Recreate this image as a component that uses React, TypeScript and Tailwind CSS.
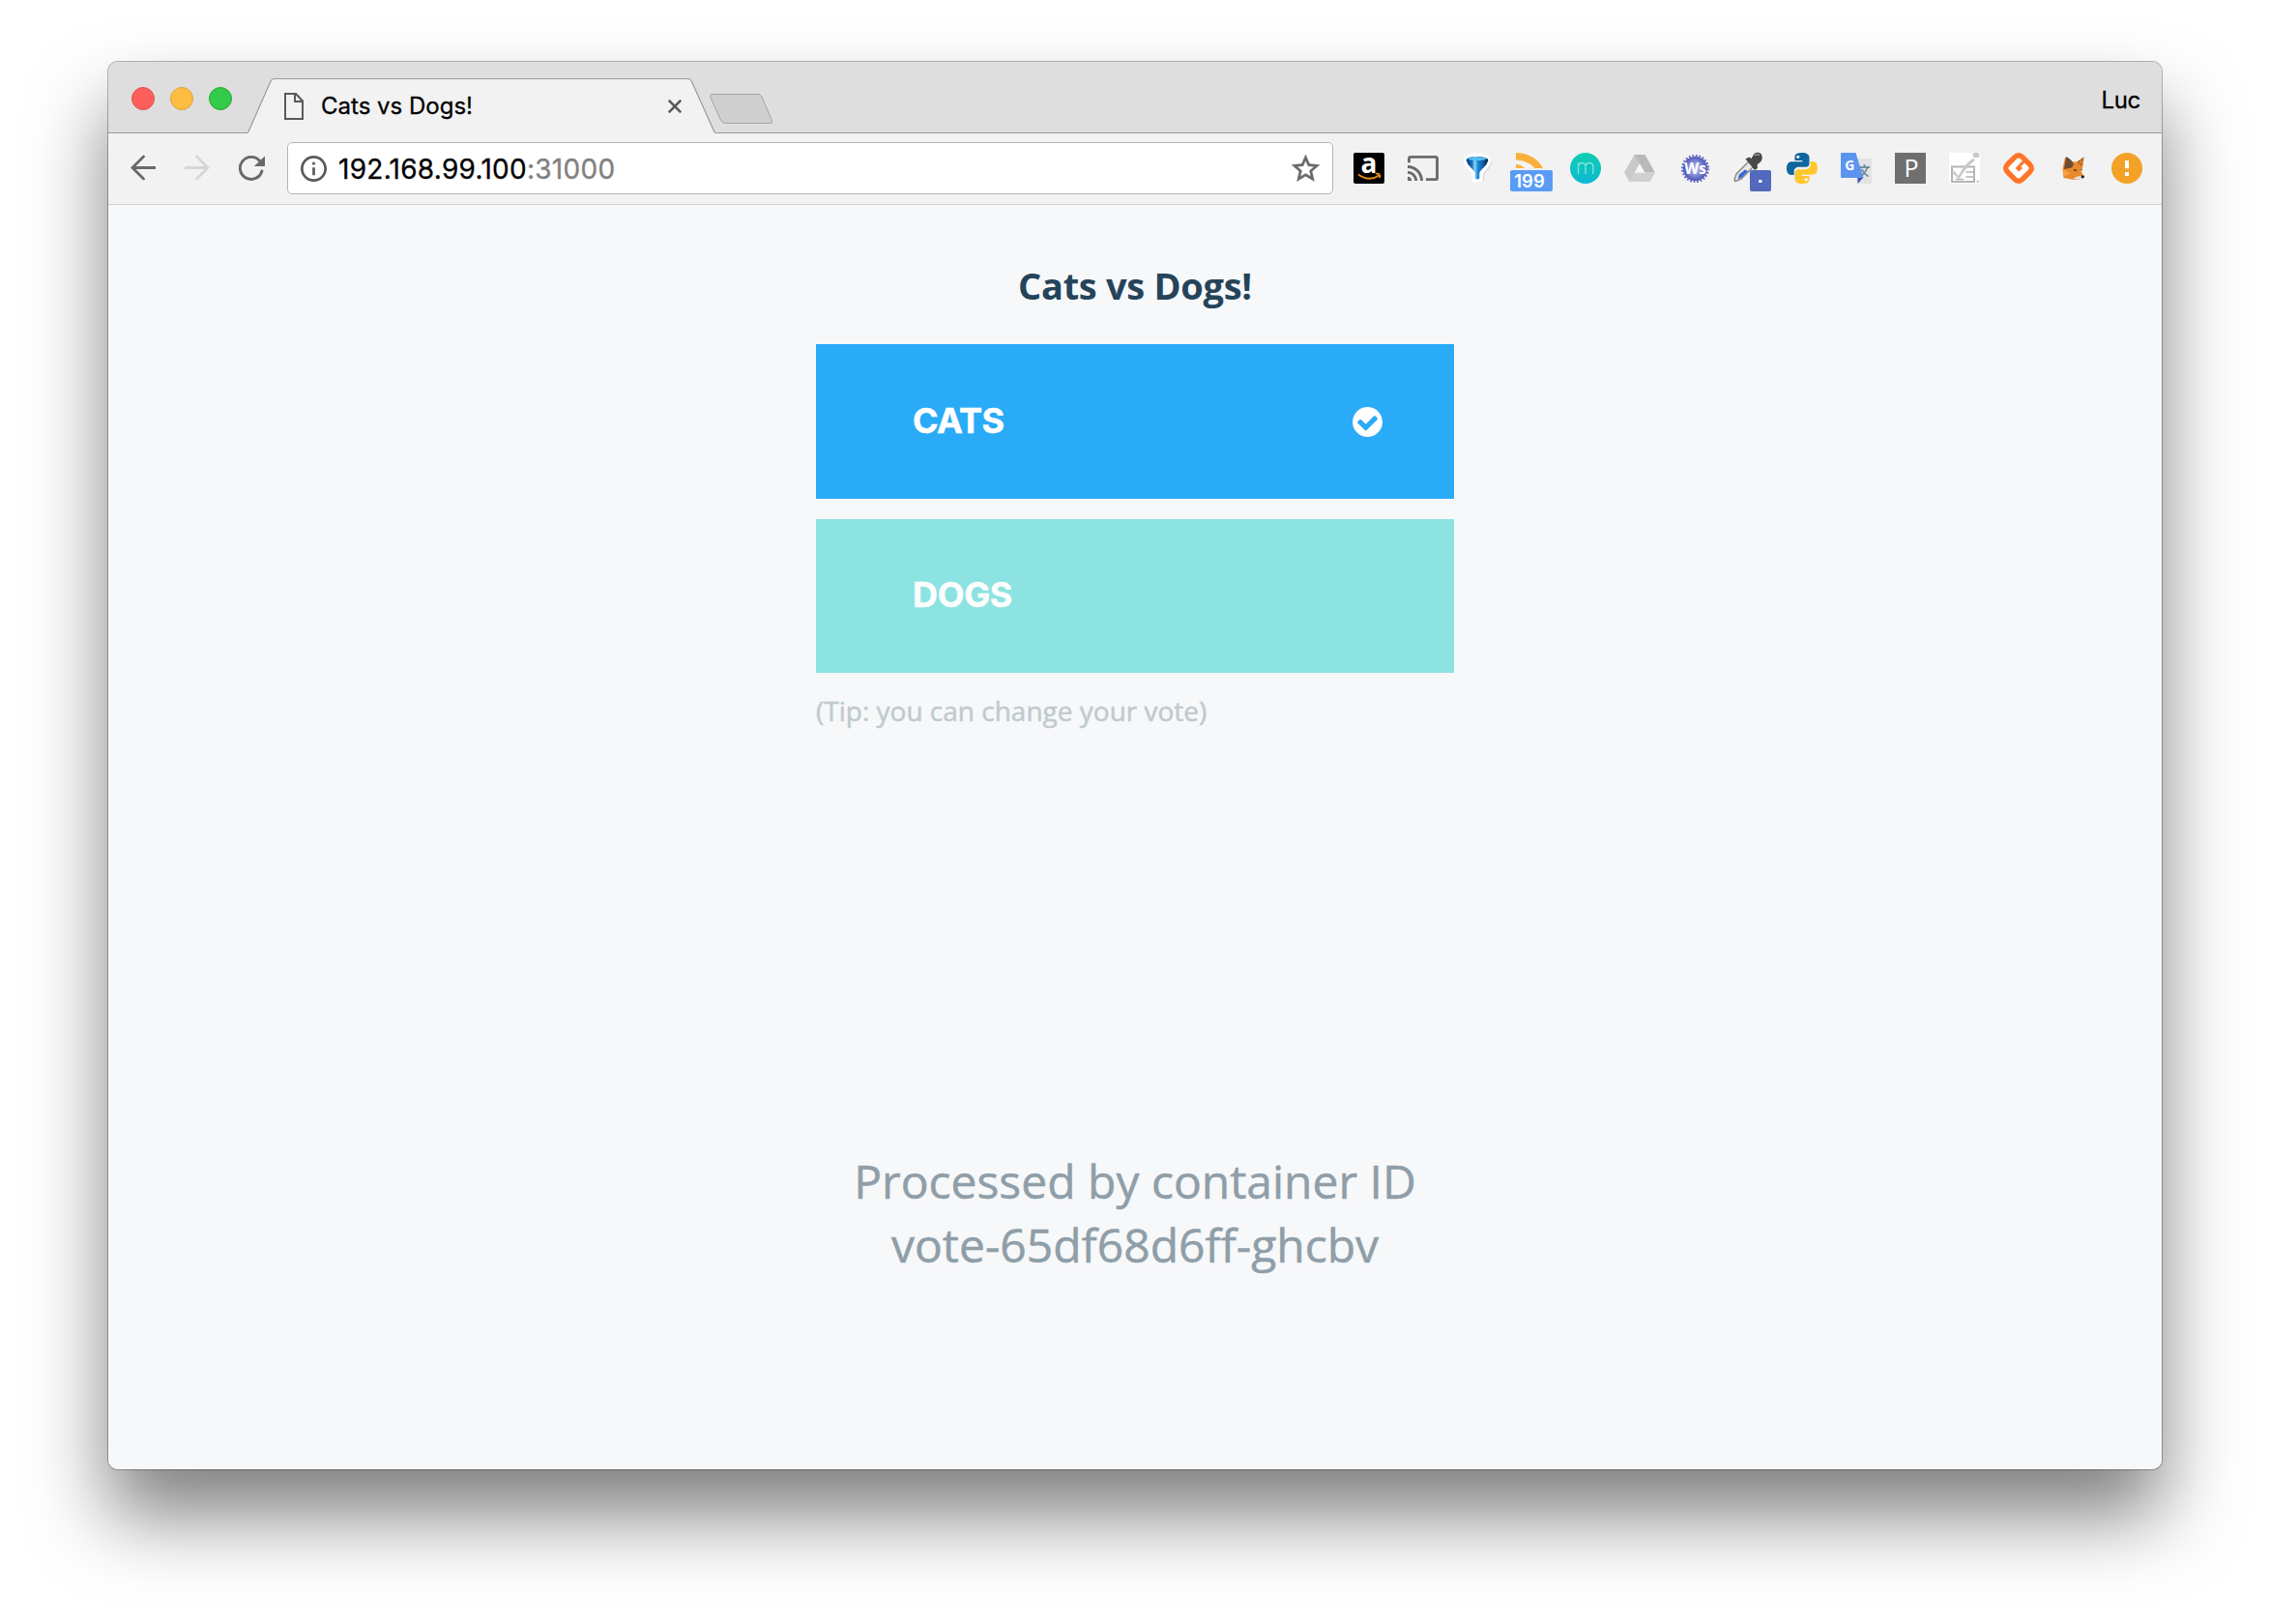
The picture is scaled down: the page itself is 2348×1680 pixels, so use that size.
import React from "react";

const CHROME = "font-[Inter,'Liberation_Sans',sans-serif]";

function TrafficLights() {
  return (
    <div className="flex gap-4 pt-[26px]">
      <span className="size-6 rounded-full border border-[#e2504c] bg-[#fd605c]" />
      <span className="size-6 rounded-full border border-[#dfa03a] bg-[#fdbd42]" />
      <span className="size-6 rounded-full border border-[#27aa35] bg-[#34ca4a]" />
    </div>
  );
}

function Tab() {
  return (
    <div className="relative -mb-px ml-4 mt-[17px] flex h-[57px] w-[484px]">
      <svg className="absolute inset-0" width="484" height="57" viewBox="0 0 484 57">
        <path d="M0 56.500 L24 3 Q25.300 .5 28 .5 H455.500 Q458 .5 459.300 3 L482 53.500 Q483 56.500 485 56.500 V57 H0 Z" fill="#f2f2f2" />
        <path d="M-1 56.500 Q.5 56.500 1.500 54 L24 3 Q25.300 .5 28 .5 H455.500 Q458 .5 459.300 3 L482 53.500 Q483 56.500 485 56.500" fill="none" stroke="#9b9b9b" strokeWidth="1.200" />
      </svg>
      <svg className="relative ml-[38px] mt-[15px] shrink-0" width="20" height="28" viewBox="0 0 20 28" fill="none" stroke="#5a5a5a" strokeWidth="2">
        <path d="M1 1 H12 L19 8.500 V27 H1 Z" />
        <path d="M11 1 V9 H19" />
      </svg>
      <span className="relative ml-[18px] mt-[13px] whitespace-nowrap text-[24px] leading-8 text-black [-webkit-text-stroke:0.3px]">Cats vs Dogs!</span>
      <svg className="absolute left-[435px] top-[22px]" width="14" height="14" viewBox="0 0 14 14" stroke="#5a5a5a" strokeWidth="2.600">
        <path d="M.7 .7 L13.300 13.300 M13.300 .7 L.7 13.300" />
      </svg>
    </div>
  );
}

function TitleBar() {
  return (
    <div className="flex h-[74px] items-start border-b border-[#9b9b9b] bg-[#dedede] pl-6">
      <TrafficLights />
      <Tab />
      <svg className="-ml-1.5 mt-[33px]" width="66" height="32" viewBox="0 0 66 32">
        <path d="M3 .5 H50 Q52.500 .5 53.800 3 L64.500 27.500 Q65.500 30.500 62.500 30.500 H16.500 Q13.500 30.500 12 28 L1 4 Q-.3 .5 3 .5 Z" fill="#cfcfcf" stroke="#a3a3a3" />
      </svg>
      <span className="ml-auto mr-[22px] mt-6 text-[24px] leading-8 tracking-[-0.3px] text-black [-webkit-text-stroke:0.3px]">Luc</span>
    </div>
  );
}

function Icon({ children }: { children: React.ReactNode }) {
  return (
    <svg className="size-8 shrink-0 overflow-visible" viewBox="0 0 32 32">
      {children}
    </svg>
  );
}

function Extensions() {
  return (
    <div className="ml-[21px] mt-5 flex gap-6">
      <Icon>
        <rect width="32" height="32" rx="2" fill="#000" />
        <text x="16" y="21" textAnchor="middle" fontFamily="Open Sans" fontWeight="700" fontSize="28" fill="#fff">a</text>
        <path d="M5 22.500 Q16 30.500 26.500 23.500 M23 21.800 Q28.500 20.800 27 26" fill="none" stroke="#e08a1a" strokeWidth="1.900" />
      </Icon>
      <svg className="size-8 shrink-0" viewBox="1 1 22 22" fill="#6b6b6b">
        <path d="M21 3H3c-1.100 0-2 .9-2 2v3h2V5h18v14h-7v2h7c1.100 0 2-.9 2-2V5c0-1.100-.9-2-2-2zM1 18v3h3c0-1.660-1.340-3-3-3zm0-4v2c2.760 0 5 2.240 5 5h2c0-3.870-3.130-7-7-7zm0-4v2c4.970 0 9 4.030 9 9h2c0-6.080-4.930-11-11-11z" />
      </svg>
      <Icon>
        <defs>
          <linearGradient id="funnel" x1="0" x2="1">
            <stop offset="0" stopColor="#0a3a70" />
            <stop offset=".25" stopColor="#0f6dbb" />
            <stop offset=".4" stopColor="#8fd2f8" />
            <stop offset=".52" stopColor="#1a8cd8" />
            <stop offset=".75" stopColor="#0d5ea8" />
            <stop offset="1" stopColor="#04203f" />
          </linearGradient>
        </defs>
        <path d="M6 9.500 Q7 5 17 5 T28 9.500 Q27.500 13.500 20 20.500 V27 H15.500 V20.500 Q7 13.500 6 9.500 Z" fill="#d8d8d8" stroke="#d8d8d8" strokeWidth="6.500" strokeLinejoin="round" />
        <path d="M5 8 Q6 4.500 16 4.500 T27 8 Q26 12.500 18.500 20 V27 H14 V20 Q6 12.500 5 8 Z" fill="#fff" stroke="#fff" strokeWidth="7" strokeLinejoin="round" />
        <path d="M4.500 7.500 Q6 4 16 4 T27.500 7.500 Q26.500 12 22.500 15.500 Q18.500 19 18.300 21 V26.500 Q16 28.500 13.700 26.500 V21 Q13.500 19 9.500 15.500 Q5.500 12 4.500 7.500 Z" fill="url(#funnel)" />
        <ellipse cx="15.800" cy="6.300" rx="9.500" ry="1.800" fill="#55bdf2" />
      </Icon>
      <Icon>
        <path d="M0 0 C12 0 23 6 28 16 H19.500 C15 10.500 8 8 0 7.500 Z" fill="#fbb03b" />
        <path d="M0 12 Q5 12 9 16 H0 Z" fill="#fbb03b" />
        <rect x="-6" y="18" width="44" height="22" rx="2" fill="#5a9cf5" />
        <text x="14" y="36" textAnchor="middle" fontFamily="Inter" fontWeight="600" fontSize="18.500" fill="#fff">199</text>
      </Icon>
      <Icon>
        <defs>
          <linearGradient id="teal" x1="0" y1="0" x2="0" y2="1">
            <stop offset="0" stopColor="#0fceb0" />
            <stop offset="1" stopColor="#0cb8d4" />
          </linearGradient>
        </defs>
        <circle cx="16" cy="16" r="16" fill="url(#teal)" />
        <path d="M8.500 22 V10.500 M8.500 14 Q9 10.500 12.200 10.500 T16 14 V22 M16 14 Q16.500 10.500 20 10.500 T23.800 14 V22" fill="none" stroke="#7fe6dc" strokeWidth="1.300" />
      </Icon>
      <Icon>
        <path d="M10.500 2 H21.500 L16 11 L5.500 30 L0 20.500 Z" fill="#c9c9c9" />
        <path d="M10.500 2 H21.500 L32 20.500 H21.500 Z" fill="#b9b9b9" />
        <path d="M10.500 20.500 H32 L26.500 30 H5.500 Z" fill="#d0d0d0" />
        <path d="M16 12 L20.800 20.500 H11 Z" fill="#f7f7f7" />
      </Icon>
      <Icon>
        <defs>
          <radialGradient id="ws">
            <stop offset="0" stopColor="#b9bdf0" />
            <stop offset=".6" stopColor="#8087d2" />
            <stop offset="1" stopColor="#4b54b8" />
          </radialGradient>
        </defs>
        <circle cx="17.500" cy="16.500" r="12.600" fill="url(#ws)" />
        <circle cx="17.500" cy="16.500" r="13.300" fill="none" stroke="#5f67c0" strokeWidth="2.600" strokeDasharray="1.700 1.782" />
        <text x="17.500" y="22.300" textAnchor="middle" fontFamily="Open Sans" fontWeight="700" fontSize="15.500" fill="#fff">Ws</text>
      </Icon>
      <Icon>
        <path d="M2 28 L4 22 L17 9 L22 14 L9 27 L3 29.500 Z" fill="#e8e8e8" stroke="#8a8a8a" strokeWidth="1.500" />
        <path d="M5.500 27 L7 22.500 L13 17.500 L16 19 L9 26 Z" fill="#3565d8" />
        <path d="M13.500 6.500 L17 4.500 L19.500 6 L22.500 1 Q26 -1.500 29.500 1 Q32 5 29.500 9 L25.500 12.500 L26 16 L23 18 Z" fill="#484848" />
        <path d="M23 3 Q25 1 28 2.500" fill="none" stroke="#999" strokeWidth="1.500" />
        <rect x="18" y="18" width="22" height="22" rx="2" fill="#5269bd" />
        <rect x="27" y="28" width="3.600" height="3" rx="1" fill="#fff" />
      </Icon>
      <Icon>
        <path d="M15.800 0 C8.500 0 8.500 3 8.500 5 V8 H16.300 V9.300 H5.400 C2 9.300 0 12 0 16 C0 20.500 2 23 5 23 H7.700 V19.200 C7.700 16.500 10 14.800 12.500 14.800 H20 C22.300 14.800 23.500 13 23.500 11 V5 C23.500 2 21 0 15.800 0 Z" fill="#0f66a0" />
        <path d="M16.200 32 C23.500 32 23.500 29 23.500 27 V24 H15.700 V22.700 H26.600 C30 22.700 32 20 32 16 C32 11.500 30 9 27 9 H24.600 V12.800 C24.600 15.500 22 17.200 19.500 17.200 H12 C9.700 17.200 8.500 19 8.500 21 V27 C8.500 30 11 32 16.200 32 Z" fill="#ffc62e" />
        <circle cx="11.800" cy="4.200" r="1.500" fill="#fff" />
        <circle cx="20.200" cy="27.800" r="1.500" fill="#fff" />
      </Icon>
      <Icon>
        <path d="M13 6 H32 V32 H17 Z" fill="#e3e3e3" />
        <path d="M17.500 32 V25.500 H23.500 Z" fill="#3f51b5" />
        <path d="M0 1 Q0 0 1 0 H15.500 L23.500 26 H1.500 Q0 26 0 24.500 Z" fill="#5b94f0" />
        <text x="9.200" y="17.800" textAnchor="middle" fontFamily="Open Sans" fontWeight="700" fontSize="14" fill="#fff">G</text>
        <path d="M19.500 15 H30 M24.500 12 V15 M28 15 Q26 20 21.500 24 M21.500 17 Q24 22 28.500 24.500" fill="none" stroke="#6d92a3" strokeWidth="1.900" />
      </Icon>
      <Icon>
        <rect width="32" height="32" fill="#6f6f6f" />
        <text x="17" y="24.500" textAnchor="middle" fontFamily="Open Sans" fontSize="25" fill="#fff">P</text>
      </Icon>
      <Icon>
        <rect width="32" height="32" fill="#fff" />
        <path d="M3 14.500 H26 V30 H3 Z" fill="none" stroke="#b5b5b5" strokeWidth="2" />
        <path d="M17.500 20 H25 M17.500 25 H25 M7 27.500 H15" stroke="#b5b5b5" strokeWidth="1.600" />
        <path d="M1.500 19.500 L5 18.500 L9.500 24 Q15 13 24.500 6 L27 7.500 Q18 14.500 10.500 27 Z" fill="#c9c9c9" />
        <ellipse cx="28" cy="2.500" rx="3.400" ry="2.800" fill="#c9c9c9" />
        <rect x="28.500" y="29" width="2.500" height="1.600" fill="#bbb" />
      </Icon>
      <Icon>
        <path d="M16 2.800 Q18.300 2.800 20 4.600 L27.400 12 Q29.300 14 29.300 16 T27.400 20 L20 27.400 Q18.300 29.200 16 29.200 T12 27.400 L4.600 20 Q2.700 18 2.700 16 T4.600 12 L12 4.600 Q13.700 2.800 16 2.800 Z" fill="#fff" stroke="#ff7429" strokeWidth="5.400" />
        <path d="M16.300 12.200 L20 16 L16.300 19.500 L12.600 16 Z" fill="#ff7429" />
        <path d="M16.500 14 L23 7.500" stroke="#ff7429" strokeWidth="3" />
      </Icon>
      <Icon>
        <path d="M8 5 L15 9 L20 9.500 L27.500 4.500 L26.500 14 L24.500 19 L27.500 25 Q24 28.500 17 28 L6.500 26 L5.500 16.500 Z" fill="#e88a2c" />
        <path d="M9 4 Q14.500 6.500 17 12 L15 15.500 L7 17 Z" fill="#6f4a35" />
        <path d="M27.500 4.500 L20.500 9.500 L25 14 Z" fill="#a55f2a" />
        <path d="M26 6.500 L22.500 9.800 L24.800 12 Z" fill="#e88a2c" />
        <path d="M17 16.500 L21 18.500 L17.500 19 Z M24.500 17 L26 16.500 L25 19 Z" fill="#4a2d18" />
        <path d="M5.500 17 L14 21 L7 24.500 Z" fill="#f6a042" />
        <path d="M16 27 Q22 22.500 27.500 24.500 Q25 28.500 16 27 Z" fill="#e9e2dc" />
        <circle cx="26.300" cy="24.800" r="1.600" fill="#1b1b1b" />
      </Icon>
      <Icon>
        <circle cx="16" cy="16" r="16" fill="#f4a227" />
        <path d="M14 8 H18 V16.300 H14 Z M14 20 H18 V24 H14 Z" fill="#fff" />
      </Icon>
    </div>
  );
}

function Toolbar() {
  return (
    <div className="flex h-[74px] items-start border-b border-[#cfd1d3] bg-[#f2f2f2]">
      <svg className="ml-[23px] mt-[22px] shrink-0" width="26" height="27" viewBox="0 0 26 27" fill="none" stroke="#696969" strokeWidth="2.800">
        <path d="M25.500 13.500 H2 M13.500 2 L2 13.500 L13.500 25" strokeLinecap="round" />
      </svg>
      <svg className="ml-[30px] mt-[22px] shrink-0" width="26" height="27" viewBox="0 0 26 27" fill="none" stroke="#d6d6d6" strokeWidth="2.800">
        <path d="M0 13.500 H24 M12.500 2 L24 13.500 L12.500 25" strokeLinecap="round" />
      </svg>
      <svg className="ml-[29px] mt-[22px] shrink-0" width="30" height="30" viewBox="0 0 30 30">
        <path d="M24.900 17 A11.500 11.500 0 1 1 22.500 6.300" fill="none" stroke="#696969" strokeWidth="2.900" strokeLinecap="round" />
        <path d="M28 1.500 V12 H16.800 Z" fill="#696969" />
      </svg>
      <div className="ml-[21px] mt-[9px] flex h-[54px] w-[1082px] items-start rounded-[5px] border border-[#b5b5b5] bg-white">
        <svg className="ml-[13px] mt-[13px] shrink-0" width="27" height="27" viewBox="2 2 20 20" fill="#5a5a5a">
          <path d="M11 7h2v2h-2zm0 4h2v6h-2zm1-9C6.480 2 2 6.480 2 12s4.480 10 10 10 10-4.480 10-10S17.520 2 12 2zm0 18c-4.410 0-8-3.590-8-8s3.590-8 8-8 8 3.590 8 8-3.590 8-8 8z" />
        </svg>
        <span className="ml-3 mt-[9px] whitespace-nowrap text-[28px] leading-9 tracking-[0.27px] text-black [-webkit-text-stroke:0.3px]">
          192.168.99.100<span className="text-[#808080]">:31000</span>
        </span>
        <svg className="ml-auto mr-[13px] mt-3 shrink-0" width="29" height="29" viewBox="2 2 20 20" fill="#696969" stroke="#696969" strokeWidth="0.300">
          <path d="M22 9.240l-7.190-.62L12 2 9.190 8.630 2 9.240l5.460 4.730L5.820 21 12 17.270 18.180 21l-1.630-7.030L22 9.240zM12 15.400l-3.760 2.270 1-4.280-3.320-2.880 4.380-.38L12 6.100l1.710 4.040 4.380.38-3.320 2.880 1 4.280L12 15.400z" />
        </svg>
      </div>
      <Extensions />
    </div>
  );
}

function VotePage() {
  return (
    <main className="flex flex-1 flex-col items-center bg-[#f7f8fa] font-['Open_Sans',sans-serif]">
      <h1 className="mt-[57px] text-[38px] font-bold leading-[52px] tracking-[-0.3px] text-[#25445a]">Cats vs Dogs!</h1>
      <form className="mt-[35px] flex w-[660px] flex-col">
        <button type="button" className="flex h-40 items-center justify-between bg-[#2aabf7] pl-[100px] pr-[74px]">
          <span className="-mt-0.5 font-[Inter,sans-serif] text-[36px] font-bold leading-[44px] tracking-[-0.6px] text-white [-webkit-text-stroke:0.5px]">CATS</span>
          <svg width="31" height="31" className="mt-px" viewBox="128 128 1536 1536" fill="#fff">
            <path d="M1412 734q0-28-18-46l-91-90q-19-19-45-19t-45 19l-408 407-226-226q-19-19-45-19t-45 19l-91 90q-18 18-18 46 0 27 18 45l362 362q19 19 45 19 27 0 46-19l543-543q18-18 18-45zm252 162q0 209-103 385.500t-279.500 279.500-385.500 103-385.500-103-279.500-279.500-103-385.500 103-385.500 279.500-279.500 385.500-103 385.500 103 279.500 279.500 103 385.500z" />
          </svg>
        </button>
        <button type="button" className="mt-[21px] flex h-[159px] items-center bg-[#8ce3e1] pl-[100px]">
          <span className="-mt-[3px] font-[Inter,sans-serif] text-[36px] font-bold leading-[44px] tracking-[-0.3px] text-[#fcfdfd] [-webkit-text-stroke:0.5px]">DOGS</span>
        </button>
      </form>
      <p className="mt-5 w-[660px] whitespace-nowrap text-[28px] leading-[38px] text-[#c0cace] [-webkit-text-stroke:0.5px]">(Tip: you can change your vote)</p>
      <p className="mt-[435px] text-center text-[48px] leading-[66px] text-[#8f9ea8] [-webkit-text-stroke:0.5px]">
        Processed by container ID
        <br />
        vote-65df68d6ff-ghcbv
      </p>
    </main>
  );
}

export default function App() {
  return (
    <div className="h-[1680px] w-[2348px] overflow-hidden bg-white pl-28 pt-16">
      <div className="flex h-[1456px] w-[2124px] flex-col rounded-[10px] shadow-[0_0_0_1px_rgba(0,0,0,0.28),0_48px_80px_rgba(0,0,0,0.5)]">
        <div className={`flex flex-1 flex-col overflow-hidden rounded-[10px] ${CHROME}`}>
          <TitleBar />
          <Toolbar />
          <VotePage />
        </div>
      </div>
    </div>
  );
}
